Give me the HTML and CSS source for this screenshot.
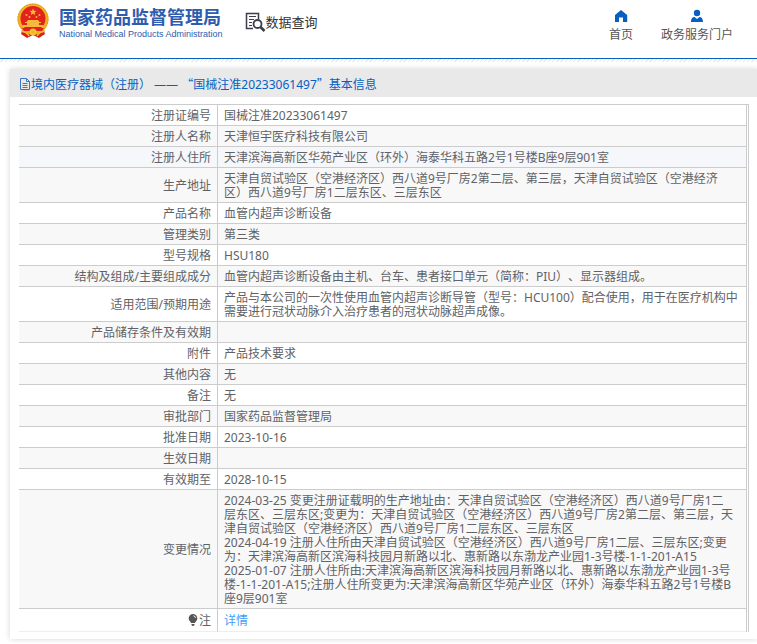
FILE: index.html
```html
<!DOCTYPE html>
<html lang="zh-CN">
<head>
  <meta charset="UTF-8">
  <title>国家药品监督管理局 数据查询</title>
  <link rel="stylesheet" href="styles.css">
</head>
<body>

  <header class="header">
    <div class="logo">
      <svg class="emblem" viewBox="0 0 34 36" aria-hidden="true">
        <path d="M7 25 L5 31 L11 35 L17 32 L23 35 L29 31 L27 25 Z" fill="#d9201c"/>
        <circle cx="17" cy="16" r="15.500" fill="#eeb422"/>
        <circle cx="17" cy="16" r="15" fill="none" stroke="#e09a20" stroke-width="1" stroke-dasharray="2 1"/>
        <circle cx="17" cy="15.500" r="12.500" fill="#e3211d"/>
        <path d="M17 5.500l1 2.300 2.500.200-1.900 1.600.600 2.400-2.200-1.300-2.200 1.300.600-2.400-1.900-1.600 2.500-.200z" fill="#f9b93b"/>
        <g fill="#f9b93b">
          <circle cx="10.500" cy="12" r="1"/>
          <circle cx="13.500" cy="14" r="1"/>
          <circle cx="20.500" cy="14" r="1"/>
          <circle cx="23.500" cy="12" r="1"/>
          <path d="M12 17h10l1.500 2H25v1h-2v2h4v2H7v-2h4v-2H9v-1h1.500z"/>
        </g>
        <path d="M6 25h22l-2 3H8z" fill="#e3211d"/>
        <circle cx="17" cy="29" r="3.500" fill="#f3c32f"/>
        <circle cx="17" cy="29" r="1.500" fill="#eeb422"/>
        <path d="M5 28q6 1 8 5M29 28q-6 1-8 5" fill="none" stroke="#f3c32f" stroke-width="1.500"/>
      </svg>
      <div class="logo-text">
        <h1>国家药品监督管理局</h1>
        <p>National Medical Products Administration</p>
      </div>
    </div>

    <div class="query">
      <svg class="query-icon" viewBox="0 0 21 20" fill="none" stroke="#3d3d4d" aria-hidden="true">
        <path d="M8 16.500H1.500V1.500h12V7" stroke-width="1.500"/>
        <path d="M4 4.500h7M4 7.500h5M4 10.500h3M4 13.500h3" stroke-width="1.200"/>
        <circle cx="12.500" cy="12" r="4" stroke-width="1.800"/>
        <path d="M15.500 15l4 4" stroke-width="2.600"/>
      </svg>
      <span>数据查询</span>
    </div>

    <nav class="nav">
      <a href="#">
        <svg viewBox="0 0 14 14" aria-hidden="true"><path d="M7 1l6.200 5v7H9V8.500H5V13H1V6z" fill="#0560c2"/></svg>
        首页
      </a>
      <a href="#">
        <svg viewBox="0 0 14 14" aria-hidden="true"><circle cx="7" cy="4" r="3.200" fill="#0560c2"/><path d="M1 13c0-4 2-5 3.500-5L7 10l2.500-2C11 8 13 9 13 13z" fill="#0560c2"/></svg>
        政务服务门户
      </a>
    </nav>
  </header>
  <div class="hatch"></div>

  <main class="card">
    <h2 class="card-title">
      <svg class="doc-icon" viewBox="0 0 12 12" fill="none" stroke="#3a78c8" aria-hidden="true">
        <path d="M1.500.500h6l3 3v8h-9zM7.500.500v3h3M3.500 5.500h5M3.500 7.500h5M3.500 9.500h5"/>
      </svg>
      <span>境内医疗器械（注册） —— <span class="quote">“</span>国械注准20233061497<span class="quote">”</span>基本信息</span>
    </h2>

    <table class="info">
      <tbody>
        <tr><th scope="row">注册证编号</th><td>国械注准20233061497</td></tr>
        <tr><th scope="row">注册人名称</th><td>天津恒宇医疗科技有限公司</td></tr>
        <tr class="active"><th scope="row">注册人住所</th><td>天津滨海高新区华苑产业区（环外）海泰华科五路2号1号楼B座9层901室</td></tr>
        <tr><th scope="row">生产地址</th><td>天津自贸试验区（空港经济区）西八道9号厂房2第二层、第三层，天津自贸试验区（空港经济区）西八道9号厂房1二层东区、三层东区</td></tr>
        <tr><th scope="row">产品名称</th><td>血管内超声诊断设备</td></tr>
        <tr><th scope="row">管理类别</th><td>第三类</td></tr>
        <tr><th scope="row">型号规格</th><td>HSU180</td></tr>
        <tr><th scope="row">结构及组成/主要组成成分</th><td>血管内超声诊断设备由主机、台车、患者接口单元（简称：PIU）、显示器组成。</td></tr>
        <tr><th scope="row">适用范围/预期用途</th><td>产品与本公司的一次性使用血管内超声诊断导管（型号：HCU100）配合使用，用于在医疗机构中需要进行冠状动脉介入治疗患者的冠状动脉超声成像。</td></tr>
        <tr><th scope="row">产品储存条件及有效期</th><td></td></tr>
        <tr><th scope="row">附件</th><td>产品技术要求</td></tr>
        <tr><th scope="row">其他内容</th><td>无</td></tr>
        <tr><th scope="row">备注</th><td>无</td></tr>
        <tr><th scope="row">审批部门</th><td>国家药品监督管理局</td></tr>
        <tr><th scope="row">批准日期</th><td>2023-10-16</td></tr>
        <tr><th scope="row">生效日期</th><td></td></tr>
        <tr><th scope="row">有效期至</th><td>2028-10-15</td></tr>
        <tr>
          <th scope="row">变更情况</th>
          <td>
            2024-03-25 变更注册证载明的生产地址由：天津自贸试验区（空港经济区）西八道9号厂房1二<br>层东区、三层东区;变更为：天津自贸试验区（空港经济区）西八道9号厂房2第二层、第三层，天津自贸试验区（空港经济区）西八道9号厂房1二层东区、三层东区<br>
            2024-04-19 注册人住所由天津自贸试验区（空港经济区）西八道9号厂房1二层、三层东区;变更为：天津滨海高新区滨海科技园月新路以北、惠新路以东渤龙产业园1-3号楼-1-1-201-A15<br>
            2025-01-07 注册人住所由:天津滨海高新区滨海科技园月新路以北、惠新路以东渤龙产业园1-3号楼-1-1-201-A15;注册人住所变更为:天津滨海高新区华苑产业区（环外）海泰华科五路2号1号楼B座9层901室
          </td>
        </tr>
        <tr class="note">
          <th scope="row"><svg class="bulb" viewBox="0 0 10 12" aria-hidden="true"><path d="M5 0a4.300 4.300 0 0 1 2.600 7.700L7 9H3l-.600-1.300A4.300 4.300 0 0 1 5 0zM3.500 10h3v1l-1 1h-1l-1-1z" fill="#555"/><path d="M5.500 1.800a2.500 2.500 0 0 1 2 2" fill="none" stroke="#fff"/></svg>注</th>
          <td><a href="#">详情</a></td>
        </tr>
      </tbody>
    </table>
  </main>

</body>
</html>
```
FILE: styles.css
```css
* {
  box-sizing: border-box;
}

body {
  margin: 0;
  font-family: "Noto Sans", "Noto Sans CJK SC", sans-serif;
  font-size: 12px;
  line-height: 14px;
  text-spacing-trim: space-all;
  color: #606266;
  background-color: #fff;
}

h1, h2, p {
  margin: 0;
}

a {
  text-decoration: none;
}

/* Cabecera */
.header {
  display: flex;
  align-items: flex-start;
  height: 59px;
  padding: 0 24px 0 16px;
  border-bottom: 1px solid #0560c2;
}

.logo {
  display: flex;
  gap: 9px;
  padding-top: 3px;
}

.emblem {
  width: 34px;
  height: 36px;
}

.logo-text {
  padding-top: 4px;
  color: #2e5cae;
  white-space: nowrap;
}

.logo-text h1 {
  font-size: 18px;
  line-height: 20px;
}

.logo-text p {
  font-family: "Liberation Sans", Arial, sans-serif;
  font-size: 9px;
  line-height: 14px;
}

.query {
  display: flex;
  align-items: center;
  margin-left: 22px;
  padding-top: 12px;
  font-size: 13px;
  line-height: 20px;
  color: #333;
}

.query-icon {
  width: 21px;
  height: 20px;
}

.nav {
  display: flex;
  gap: 28px;
  margin-left: auto;
  padding-top: 9px;
}

.nav a {
  display: flex;
  flex-direction: column;
  align-items: center;
  gap: 5px;
  color: #555;
}

.nav svg {
  width: 14px;
  height: 14px;
}

.hatch {
  height: 3px;
  background: repeating-linear-gradient(135deg, #fff 0 2px, #eaeaea 2px 3px);
}

/* Ficha */
.card {
  margin: 7px 0 4px 10px;
  padding-bottom: 7px;
  box-shadow: 0 0 6px rgba(0, 0, 0, 0.16);
}

.card-title {
  display: flex;
  align-items: center;
  height: 28px;
  padding: 2px 0 0 9px;
  font-size: 12px;
  font-weight: normal;
  color: #0560c2;
  background-color: #e9e9e9;
}

.doc-icon {
  width: 12px;
  height: 12px;
}

/* comillas de ancho completo */
.quote {
  font-family: "Noto Sans CJK SC", sans-serif;
}

.info {
  width: calc(100% - 17px);
  margin: 7px 8px 0 9px;
  border-collapse: separate;
  border-spacing: 0;
  border-top: 1px solid #ccc;
  border-right: 3px double #ccc;
}

.info th,
.info td {
  padding: 4px 6px 2px;
  border-bottom: 1px solid #ccc;
}

.info th {
  width: 199px;
  border-right: 1px solid #ccc;
  font-weight: normal;
  text-align: right;
}

.info td {
  height: 21px;
}

.info tr:nth-child(even) {
  background-color: #f8f8f8;
}

.info tr.active {
  background-color: #f5f7fa;
}

.info .note th,
.info .note td {
  height: 23px;
  border-bottom-color: #ebeef5;
}

.info a {
  color: #409eff;
}

.bulb {
  width: 10px;
  height: 12px;
  margin-right: 1px;
  vertical-align: -1px;
}
```
